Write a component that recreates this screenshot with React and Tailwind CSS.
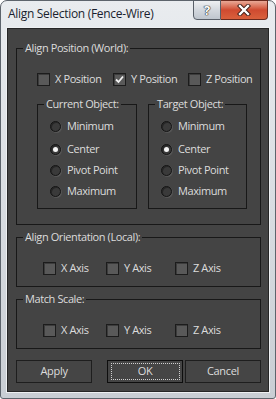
import React from 'react';

const font = { fontFamily: '"Open Sans", "Liberation Sans", sans-serif' };

const Check = ({ checked }) => (
  <span className="w-[13px] h-[13px] shrink-0 border border-[#1c1c1c] bg-[#595959] shadow-[inset_1px_1px_0_#3c3c3c] flex items-center justify-center">
    {checked && (
      <svg width="11" height="11" viewBox="0 0 11 11">
        <path d="M2 5.5 L4.5 8 L9 2.5" fill="none" stroke="#f2f2f2" strokeWidth="1.8" />
      </svg>
    )}
  </span>
);

const Radio = ({ on }) => (
  <span className="w-[11px] h-[11px] shrink-0 rounded-full border border-[#141414] bg-[#3a3a3a] shadow-[inset_1px_1px_0_#262626,1px_1px_0_#555] flex items-center justify-center">
    {on && <span className="w-[5px] h-[5px] rounded-full bg-[#f4f4f4]" />}
  </span>
);

const CheckItem = ({ label, checked, className }) => (
  <div className={`flex items-center gap-[5px] ${className}`}>
    <Check checked={checked} />
    <span className="text-[11px] leading-[14px] tracking-[-0.4px] text-[#dcdcdc]">{label}</span>
  </div>
);

const RadioItem = ({ label, on, className }) => (
  <div className={`flex items-center gap-[6px] h-[14px] ${className}`}>
    <Radio on={on} />
    <span className="text-[11px] leading-[14px] tracking-[-0.4px] text-[#dcdcdc]">{label}</span>
  </div>
);

const Group = ({ title, className, children }) => (
  <fieldset className={`border border-[#181818] ${className}`}>
    <legend className="ml-[6px] px-[2px] text-[11px] leading-[14px] tracking-[-0.4px] text-[#dcdcdc]">{title}</legend>
    {children}
  </fieldset>
);

const SubGroup = ({ title, selected, className }) => (
  <Group title={title} className={className}>
    <div className="flex flex-col pl-[12px] pt-[8px]">
      {['Minimum', 'Center', 'Pivot Point', 'Maximum'].map((l, i) => (
        <RadioItem key={l} label={l} on={l === selected} className={i === 1 ? 'mt-[9px]' : i > 1 ? 'mt-[7px]' : ''} />
      ))}
    </div>
  </Group>
);

const Button = ({ label, focused, className }) => (
  <button className={`h-[23px] border ${focused ? 'border-[#0e0e0e]' : 'border-[#1e1e1e]'} bg-[#454545] text-[11px] tracking-[-0.3px] text-[#dcdcdc] flex items-center justify-center ${className}`}>
    {focused ? (
      <span className="w-[69px] h-[17px] border border-dotted border-[#cfcfcf] flex items-center justify-center">{label}</span>
    ) : (
      label
    )}
  </button>
);

export default function App() {
  return (
    <div style={font} className="w-[276px] h-[399px] bg-white">
      <div className="w-[276px] h-[399px] rounded-t-[7px] rounded-b-[3px] border border-[#5d646c] bg-gradient-to-b from-[#e9ecef] via-[#d9dde2] to-[#c9ced4] flex flex-col">
        {/* title bar */}
        <div className="h-[27px] flex items-start">
          <span className="pl-[7px] pt-[5px] text-[12px] leading-[16px] tracking-[-0.3px] text-[#1a1f2e]">Align Selection (Fence-Wire)</span>
          <div className="ml-auto mr-[7px] flex -mt-[1px]">
            <div className="w-[28px] h-[20px] rounded-bl-[4px] border border-[#596069] bg-gradient-to-b from-[#eef0f2] via-[#d3d8de] to-[#bfc6ce] flex items-center justify-center">
              <span className="text-[13px] leading-[13px] font-bold text-white [text-shadow:0_0_1px_#222,0_0_1px_#222,0_0_1px_#222]">?</span>
            </div>
            <div className="w-[47px] h-[20px] rounded-br-[4px] border border-l-0 border-[#6b2a1e] bg-gradient-to-b from-[#e8a896] via-[#cf4a30] to-[#d9603c] flex items-center justify-center">
              <svg width="14" height="12" viewBox="0 0 14 12">
                <path d="M3 2 L11 10 M11 2 L3 10" stroke="#3a1a14" strokeWidth="4.2" strokeLinecap="square" />
                <path d="M3 2 L11 10 M11 2 L3 10" stroke="#ffffff" strokeWidth="2.4" strokeLinecap="square" />
              </svg>
            </div>
          </div>
        </div>
        {/* client */}
        <div className="ml-[6px] w-[262px] h-[364px] border border-[#262626] bg-[#444444] shadow-[0_0_0_1px_#eef0f2] flex flex-col">
          <Group title="Align Position (World):" className="ml-[8px] mt-[12px] w-[245px] h-[184px]">
            <div className="flex pl-[20px] mt-[17px]">
              <CheckItem label="X Position" className="w-[76px]" />
              <CheckItem label="Y Position" checked className="w-[75px]" />
              <CheckItem label="Z Position" />
            </div>
            <div className="flex pl-[20px] gap-[11px] mt-[11px]">
              <SubGroup title="Current Object:" selected="Center" className="w-[100px] h-[112px]" />
              <SubGroup title="Target Object:" selected="Center" className="w-[99px] h-[112px]" />
            </div>
          </Group>
          <Group title="Align Orientation (Local):" className="ml-[8px] mt-[5px] w-[245px] h-[57px]">
            <div className="flex pl-[26px] mt-[17px]">
              <CheckItem label="X Axis" className="w-[63px]" />
              <CheckItem label="Y Axis" className="w-[69px]" />
              <CheckItem label="Z Axis" />
            </div>
          </Group>
          <Group title="Match Scale:" className="ml-[8px] mt-[5px] w-[245px] h-[57px]">
            <div className="flex pl-[26px] mt-[17px]">
              <CheckItem label="X Axis" className="w-[63px]" />
              <CheckItem label="Y Axis" className="w-[69px]" />
              <CheckItem label="Z Axis" />
            </div>
          </Group>
          <div className="flex ml-[8px] mt-[11px]">
            <Button label="Apply" className="w-[76px]" />
            <Button label="OK" focused className="w-[76px] ml-[15px]" />
            <Button label="Cancel" className="w-[76px] ml-[2px]" />
          </div>
        </div>
      </div>
    </div>
  );
}
